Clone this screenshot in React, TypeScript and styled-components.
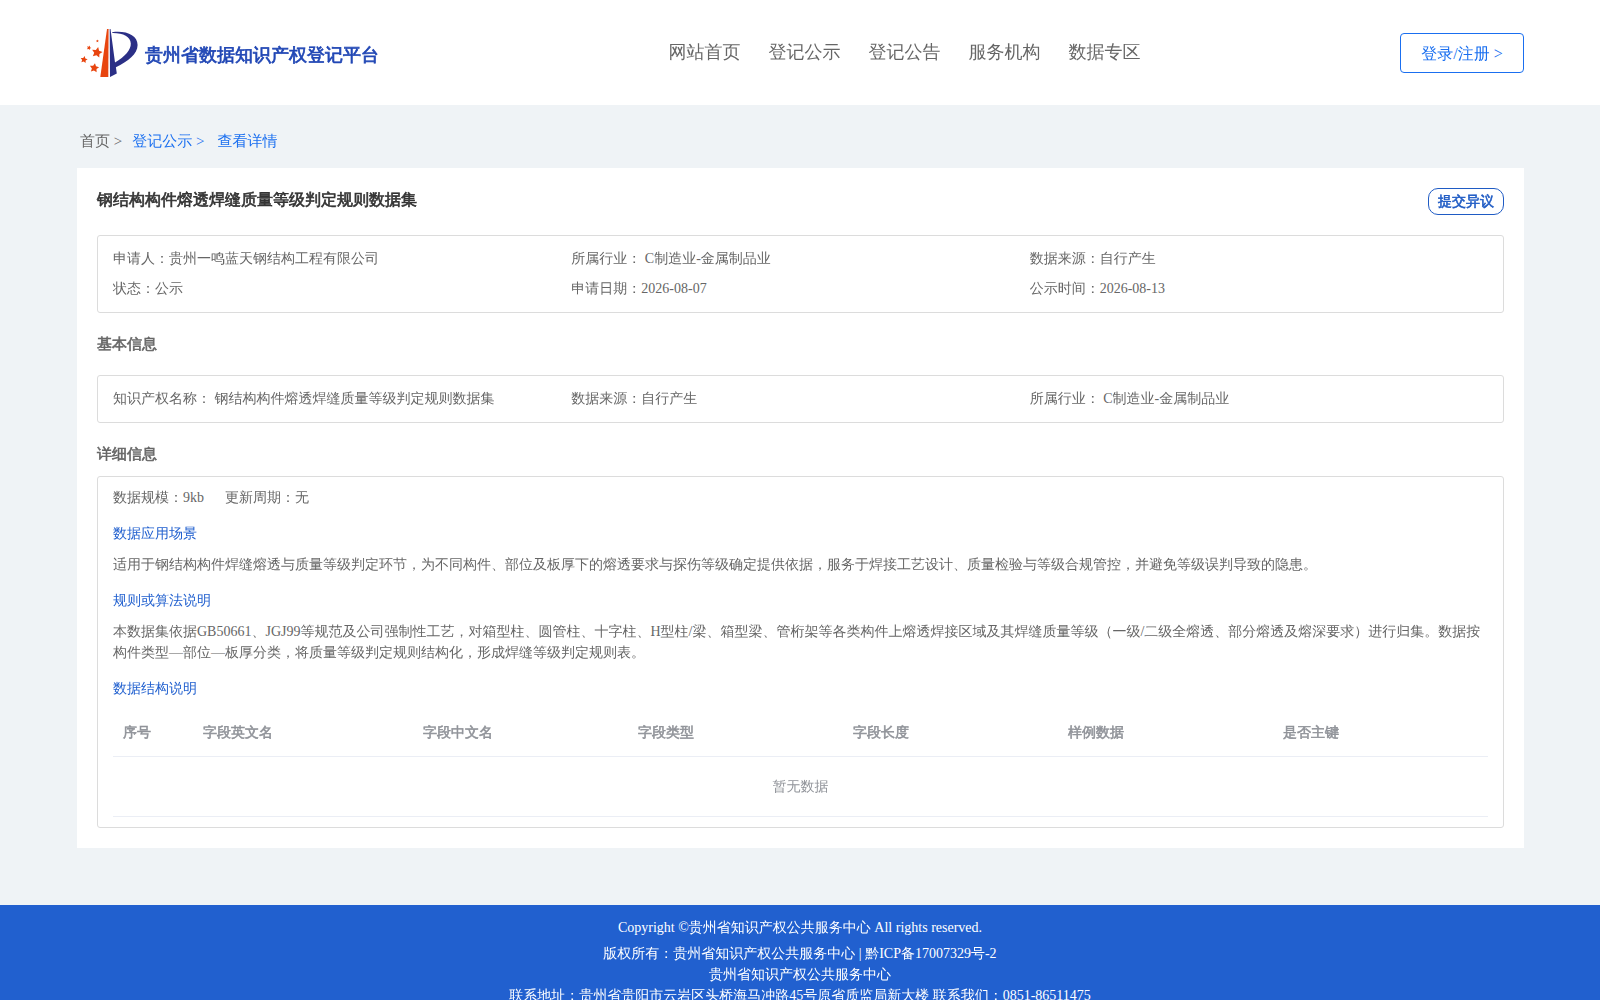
import React from 'react';
import styled, { createGlobalStyle, css } from 'styled-components';

const GlobalStyle = createGlobalStyle`
  *, *::before, *::after { box-sizing: border-box; }
  body {
    margin: 0;
    background: #eff3f6;
    color: #666;
    font-family: "Liberation Serif", "WenQuanYi Zen Hei", "Noto Sans CJK SC", serif;
    font-size: 14px;
    line-height: 21px;
  }
  h1, h2, h3, p, ul, ol, dl, dd { margin: 0; padding: 0; }
  ul, ol { list-style: none; }
  a { color: inherit; text-decoration: none; }
  button { font-family: inherit; cursor: pointer; }
`;

/* The Chinese face has a single weight, so headings are thickened with a stroke. */
const strong = css`
  font-weight: bold;
  -webkit-text-stroke: 0.04em currentColor;
`;

const Header = styled.header`
  display: flex;
  justify-content: space-between;
  align-items: center;
  height: 105px;
  padding: 0 76px 0 80px;
  background: #fff;
`;

const Brand = styled.a`
  display: flex;
  align-items: center;
  gap: 7px;
  padding-right: 30px;
  color: #2147b5;
  font-size: 18px;
  line-height: 24px;
  white-space: nowrap;
  ${strong}
`;

const BrandName = styled.span`
  padding-top: 4px;
`;

const Nav = styled.nav`
  display: flex;
  gap: 28px;
  padding-bottom: 2px;
  font-size: 18px;
  line-height: 24px;
  white-space: nowrap;
`;

const LoginButton = styled.button`
  min-width: 124px;
  height: 40px;
  padding: 3px 20px 0;
  border: 1px solid #1a6ff0;
  border-radius: 4px;
  background: #fff;
  color: #1a6ff0;
  font-size: 16px;
`;

const Main = styled.main`
  padding: 0 76px 57px 77px;
`;

const Breadcrumb = styled.nav`
  display: flex;
  align-items: center;
  height: 63px;
  padding: 10px 3px 0;
  font-size: 15px;
`;

const Crumb = styled.a<{ $active?: boolean; $gap?: number }>`
  margin-right: ${(p) => p.$gap ?? 0}px;
  color: ${(p) => (p.$active ? '#1a6ff0' : '#666')};
`;

const Card = styled.article`
  padding: 20px;
  background: #fff;
`;

const CardHead = styled.div`
  display: flex;
  justify-content: space-between;
  align-items: flex-start;
  height: 47px;
`;

const CardTitle = styled.h1`
  color: #333;
  font-size: 16px;
  line-height: 24px;
  ${strong}
`;

const ObjectionButton = styled.button`
  height: 27px;
  padding: 0 9px;
  border: 1px solid #1f5bc4;
  border-radius: 10px;
  background: #fff;
  color: #1f5bc4;
  font-size: 14px;
  ${strong}
`;

const Panel = styled.section`
  border: 1px solid #dcdcdc;
  border-radius: 3px;
`;

const InfoList = styled.dl`
  display: grid;
  grid-template-columns: repeat(3, 1fr);
  padding: 8px 15px;
  line-height: 30px;
`;

const InfoItem = styled.div`
  display: flex;
  white-space: pre;
`;

const SectionTitle = styled.h2<{ $below: number }>`
  padding: 21px 0 ${(p) => p.$below}px;
  font-size: 15px;
  line-height: 21px;
  ${strong}
`;

const Detail = styled(Panel)`
  padding: 10px 15px;
`;

const Facts = styled.p`
  display: flex;
  gap: 21px;
`;

const SubTitle = styled.h3`
  margin: 15px 0 10px;
  color: #2160cf;
  font-size: 14px;
  font-weight: normal;
`;

const Table = styled.table`
  width: 100%;
  border-collapse: separate;
  border-spacing: 0;
  table-layout: fixed;
  color: #909399;
`;

const Th = styled.th<{ $width?: number }>`
  width: ${(p) => (p.$width ? `${p.$width}px` : 'auto')};
  height: 48px;
  padding: 0 10px;
  border-bottom: 1px solid #ebeef5;
  text-align: left;
  ${strong}
`;

const EmptyCell = styled.td`
  height: 60px;
  padding: 0;
  border-bottom: 1px solid #ebeef5;
  text-align: center;
`;

const Footer = styled.footer`
  padding: 12px 20px;
  background: #2160cf;
  color: #fff;
  text-align: center;
`;

const Copyright = styled.p`
  padding-bottom: 5px;
`;

const star = (cx: number, cy: number, r: number, turn: number) =>
  Array.from({ length: 10 }, (_, i) => {
    const radius = i % 2 ? r * 0.5 : r;
    const angle = ((i * 36 + turn - 90) * Math.PI) / 180;
    return `${(cx + radius * Math.cos(angle)).toFixed(2)},${(cy + radius * Math.sin(angle)).toFixed(2)}`;
  }).join(' ');

const stars: [number, number, number, number][] = [
  [17, 24.5, 5.6, 12],
  [4, 31.7, 3.7, 10],
  [14.3, 40, 4.9, 8],
  [9, 19.8, 2.4, 20],
  [17.4, 13, 1.5, 0],
];

const Logo = () => (
  <svg width="58" height="50" viewBox="0 0 58 50" aria-hidden="true">
    {stars.map(([x, y, r, t]) => (
      <polygon key={`${x}-${y}`} points={star(x, y, r, t)} fill="#e8450f" />
    ))}
    <path d="M27 1H28.6L28.3 49H20.3Z" fill="#e8450f" />
    <path
      d="M29.700 1H30.500L35 34.600C45 28.500 51 22 50.800 15.500C50.500 8.500 43 4.800 32.200 5V4.200C46 2.400 57.600 7 57.600 17C57.600 26 48 33.500 35.900 39.200L36.800 45.500L30 49Z"
      fill="#2b2f86"
    />
  </svg>
);

const navItems = ['网站首页', '登记公示', '登记公告', '服务机构', '数据专区'];

const summary = [
  ['申请人：', '贵州一鸣蓝天钢结构工程有限公司'],
  ['所属行业： ', 'C制造业-金属制品业'],
  ['数据来源：', '自行产生'],
  ['状态：', '公示'],
  ['申请日期：', '2026-08-07'],
  ['公示时间：', '2026-08-13'],
];

const basics = [
  ['知识产权名称： ', '钢结构构件熔透焊缝质量等级判定规则数据集'],
  ['数据来源：', '自行产生'],
  ['所属行业： ', 'C制造业-金属制品业'],
];

const columns: { label: string; width?: number }[] = [
  { label: '序号', width: 80 },
  { label: '字段英文名', width: 220 },
  { label: '字段中文名' },
  { label: '字段类型' },
  { label: '字段长度' },
  { label: '样例数据' },
  { label: '是否主键' },
];

const Info = ({ items }: { items: string[][] }) => (
  <Panel>
    <InfoList>
      {items.map(([label, value]) => (
        <InfoItem key={label}>
          <dt>{label}</dt>
          <dd>{value}</dd>
        </InfoItem>
      ))}
    </InfoList>
  </Panel>
);

export default function App() {
  return (
    <>
      <GlobalStyle />
      <Header>
        <Brand href="#">
          <Logo />
          <BrandName>贵州省数据知识产权登记平台</BrandName>
        </Brand>
        <Nav>
          {navItems.map((item) => (
            <a key={item} href="#">{item}</a>
          ))}
        </Nav>
        <LoginButton type="button">登录/注册 &gt;</LoginButton>
      </Header>

      <Main>
        <Breadcrumb>
          <Crumb href="#" $gap={10}>首页 &gt;</Crumb>
          <Crumb href="#" $active $gap={13}>登记公示 &gt;</Crumb>
          <Crumb href="#" $active>查看详情</Crumb>
        </Breadcrumb>

        <Card>
          <CardHead>
            <CardTitle>钢结构构件熔透焊缝质量等级判定规则数据集</CardTitle>
            <ObjectionButton type="button">提交异议</ObjectionButton>
          </CardHead>
          <Info items={summary} />

          <SectionTitle $below={20}>基本信息</SectionTitle>
          <Info items={basics} />

          <SectionTitle $below={11}>详细信息</SectionTitle>
          <Detail>
            <Facts>
              <span>数据规模：9kb</span>
              <span>更新周期：无</span>
            </Facts>
            <SubTitle>数据应用场景</SubTitle>
            <p>适用于钢结构构件焊缝熔透与质量等级判定环节，为不同构件、部位及板厚下的熔透要求与探伤等级确定提供依据，服务于焊接工艺设计、质量检验与等级合规管控，并避免等级误判导致的隐患。</p>
            <SubTitle>规则或算法说明</SubTitle>
            <p>本数据集依据GB50661、JGJ99等规范及公司强制性工艺，对箱型柱、圆管柱、十字柱、H型柱/梁、箱型梁、管桁架等各类构件上熔透焊接区域及其焊缝质量等级（一级/二级全熔透、部分熔透及熔深要求）进行归集。数据按构件类型—部位—板厚分类，将质量等级判定规则结构化，形成焊缝等级判定规则表。</p>
            <SubTitle>数据结构说明</SubTitle>
            <Table>
              <thead>
                <tr>
                  {columns.map((c) => (
                    <Th key={c.label} scope="col" $width={c.width}>{c.label}</Th>
                  ))}
                </tr>
              </thead>
              <tbody>
                <tr>
                  <EmptyCell colSpan={columns.length}>暂无数据</EmptyCell>
                </tr>
              </tbody>
            </Table>
          </Detail>
        </Card>
      </Main>

      <Footer>
        <Copyright>Copyright ©贵州省知识产权公共服务中心 All rights reserved.</Copyright>
        <p>版权所有：贵州省知识产权公共服务中心 | 黔ICP备17007329号-2</p>
        <p>贵州省知识产权公共服务中心</p>
        <p>联系地址：贵州省贵阳市云岩区头桥海马冲路45号原省质监局新大楼 联系我们：0851-86511475</p>
      </Footer>
    </>
  );
}
